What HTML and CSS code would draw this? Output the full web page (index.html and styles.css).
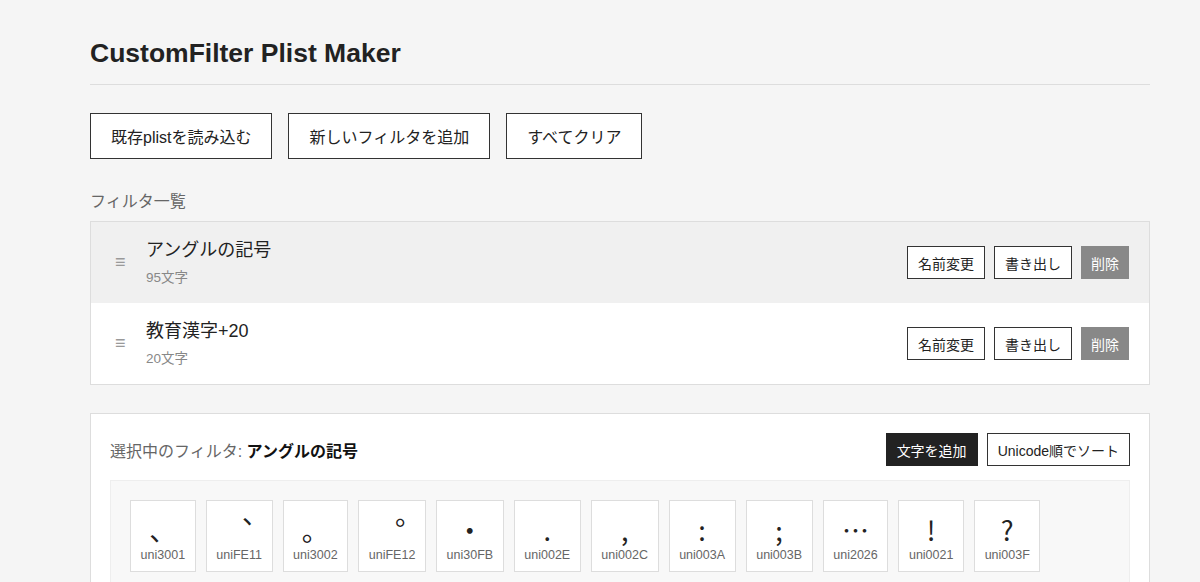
FILE: index.html
```html
<!DOCTYPE html>
<html lang="ja">
<head>
  <meta charset="UTF-8" />
  <meta name="viewport" content="width=device-width, initial-scale=1.0"/>
  <title>CustomFilter Plist Maker</title>
  <link rel="stylesheet" href="styles.css">
</head>
<body>

<div class="container">
  <h1>CustomFilter Plist Maker</h1>

  <!-- Toolbar -->
  <div class="toolbar">
    <button class="btn">既存plistを読み込む</button>
    <button class="btn">新しいフィルタを追加</button>
    <button class="btn">すべてクリア</button>
  </div>

  <!-- Filter list -->
  <div class="section-label">フィルタ一覧</div>
  <div class="filter-list">
    <div class="filter-row selected">
      <span class="handle">≡</span>
      <div class="filter-info">
        <div class="filter-name">アングルの記号</div>
        <div class="filter-count">95文字</div>
      </div>
      <div class="row-actions">
        <button class="btn-sm">名前変更</button>
        <button class="btn-sm">書き出し</button>
        <button class="btn-sm btn-delete">削除</button>
      </div>
    </div>
    <div class="filter-row">
      <span class="handle">≡</span>
      <div class="filter-info">
        <div class="filter-name">教育漢字+20</div>
        <div class="filter-count">20文字</div>
      </div>
      <div class="row-actions">
        <button class="btn-sm">名前変更</button>
        <button class="btn-sm">書き出し</button>
        <button class="btn-sm btn-delete">削除</button>
      </div>
    </div>
  </div>

  <!-- Editor for the selected filter -->
  <div class="editor">
    <div class="editor-head">
      <div class="editor-title">選択中のフィルタ: <strong>アングルの記号</strong></div>
      <div class="row-actions">
        <button class="btn-sm btn-dark">文字を追加</button>
        <button class="btn-sm">Unicode順でソート</button>
      </div>
    </div>
    <div class="char-grid" id="chars"></div>
  </div>
</div>

<script>
  const chars = ["、", "︑", "。", "︒", "・", ".", ",", ":", ";", "…", "!", "?"];

  function glyphName(ch) {
    return "uni" + ch.codePointAt(0).toString(16).toUpperCase().padStart(4, "0");
  }

  const grid = document.getElementById("chars");
  chars.forEach(ch => {
    const tile = document.createElement("div");
    tile.className = "char-tile";
    tile.innerHTML = '<div class="char-glyph">' + ch + '</div><div class="char-code">' + glyphName(ch) + '</div>';
    grid.appendChild(tile);
  });
</script>

</body>
</html>
```

FILE: styles.css
```css
body {
  font-family: "Liberation Sans", "Noto Sans CJK JP", sans-serif;
  background-color: #f5f5f5;
  color: #222;
  margin: 0;
}

.container {
  width: 1060px;
  margin-left: 90px;
  padding-top: 38px;
}

h1 {
  font-size: 26.5px;
  margin: 0;
  padding-bottom: 15px;
  border-bottom: 1px solid #ddd;
  color: #222;
}

.toolbar {
  display: flex;
  gap: 16px;
  margin-top: 28px;
}

.btn {
  font-family: inherit;
  font-size: 16px;
  height: 46px;
  padding: 0 20px;
  background: white;
  color: #222;
  border: 1px solid #333;
  cursor: pointer;
}

.section-label {
  margin-top: 29px;
  color: #666;
  font-size: 16px;
}

.filter-list {
  margin-top: 9px;
  background: white;
  border: 1px solid #ddd;
}

.filter-row {
  display: flex;
  align-items: center;
  height: 81px;
  padding: 0 20px;
}

.filter-row.selected {
  background-color: #f0f0f0;
}

.handle {
  color: #999;
  font-size: 18px;
  width: 35px;
  padding-left: 4px;
  box-sizing: border-box;
}

.filter-info {
  flex: 1;
  margin-top: -4px;
}

.filter-name {
  font-size: 18px;
}

.filter-count {
  margin-top: 5px;
  font-size: 13.5px;
  color: #888;
}

.row-actions {
  display: flex;
  gap: 9px;
}

.btn-sm {
  font-family: inherit;
  font-size: 14px;
  height: 33px;
  padding: 0 10px;
  background: white;
  color: #222;
  border: 1px solid #333;
  cursor: pointer;
}

.btn-delete {
  background-color: #888;
  border: none;
  color: white;
}

.btn-dark {
  background-color: #222;
  border-color: #222;
  color: white;
}

.editor {
  margin-top: 28px;
  background: white;
  border: 1px solid #ddd;
  padding: 19px 19px 0;
}

.editor-head {
  display: flex;
  align-items: center;
  justify-content: space-between;
}

.editor-title {
  font-size: 16px;
  color: #666;
}

.editor-title strong {
  color: #111;
}

.char-grid {
  margin-top: 14px;
  background-color: #f8f8f8;
  border: 1px solid #eee;
  padding: 19px 19px;
  display: flex;
  flex-wrap: wrap;
  gap: 10px;
}

.char-tile {
  background: white;
  border: 1px solid #ddd;
  height: 72px;
  padding: 0 9.6px 9px;
  box-sizing: border-box;
  display: flex;
  flex-direction: column;
  align-items: center;
  justify-content: flex-end;
}

.char-glyph {
  font-size: 27px;
  line-height: 32px;
  font-family: "Noto Sans CJK JP", sans-serif;
}

.char-code {
  font-size: 12.5px;
  color: #666;
  margin-top: 2px;
}
```
